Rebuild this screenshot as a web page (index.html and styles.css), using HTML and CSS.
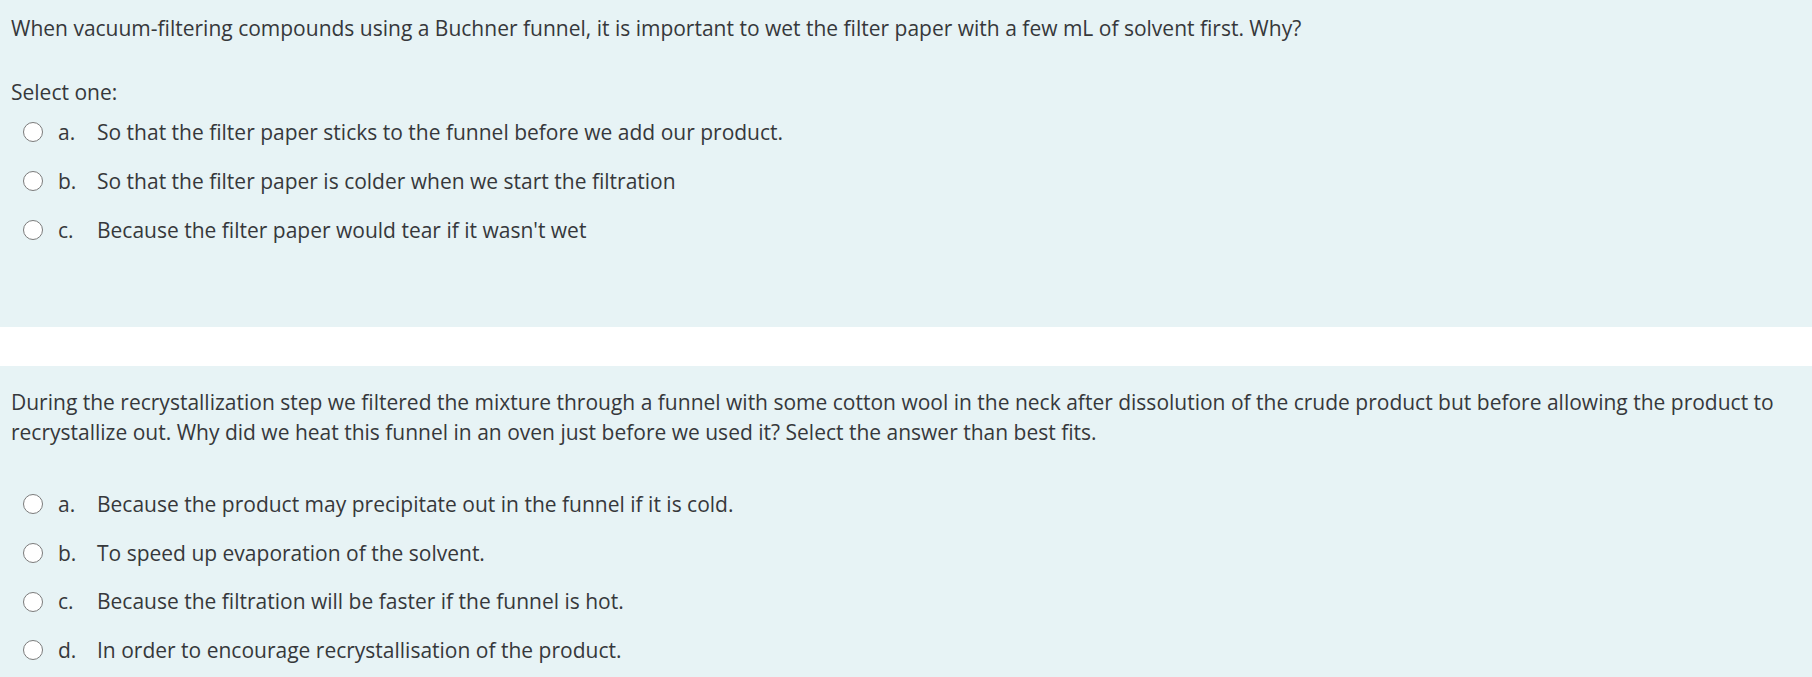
FILE: index.html
```html
<!DOCTYPE html>
<html lang="en">
<head>
<meta charset="utf-8">
<title>Quiz</title>
<link rel="stylesheet" href="styles.css">
</head>
<body>
<div class="que que-first">
  <div class="qtext">When vacuum-filtering compounds using a Buchner funnel, it is important to wet the filter paper with a few mL of solvent first. Why?</div>
  <div class="prompt">Select one:</div>
  <div class="answer">
    <div class="opt"><span class="radio"></span><span class="num">a.</span><span class="text">So that the filter paper sticks to the funnel before we add our product.</span></div>
    <div class="opt"><span class="radio"></span><span class="num">b.</span><span class="text">So that the filter paper is colder when we start the filtration</span></div>
    <div class="opt"><span class="radio"></span><span class="num">c.</span><span class="text">Because the filter paper would tear if it wasn't wet</span></div>
  </div>
</div>
<div class="que que-second">
  <div class="qtext qtext-long">During the recrystallization step we filtered the mixture through a funnel with some cotton wool in the neck after dissolution of the crude product but before allowing the product to recrystallize out. Why did we heat this funnel in an oven just before we used it? Select the answer than best fits.</div>
  <div class="answer">
    <div class="opt"><span class="radio"></span><span class="num">a.</span><span class="text">Because the product may precipitate out in the funnel if it is cold.</span></div>
    <div class="opt"><span class="radio"></span><span class="num">b.</span><span class="text">To speed up evaporation of the solvent.</span></div>
    <div class="opt"><span class="radio"></span><span class="num">c.</span><span class="text">Because the filtration will be faster if the funnel is hot.</span></div>
    <div class="opt"><span class="radio"></span><span class="num">d.</span><span class="text">In order to encourage recrystallisation of the product.</span></div>
  </div>
</div>
</body>
</html>
```

FILE: styles.css
```css
html, body {
  margin: 0;
  padding: 0;
  background: #ffffff;
}

body {
  font-family: "Open Sans", "Noto Sans", sans-serif;
  font-size: 21px;
  line-height: 30.4px;
  color: #36383b;
}

.que {
  background: #e7f3f5;
  padding-left: 11px;
  padding-right: 11px;
}

.que-first {
  padding-top: 13px;
  padding-bottom: 73.4px;
  margin-bottom: 39px;
}

.que-second {
  padding-top: 21px;
  padding-bottom: 30px;
}

.qtext {
  margin-bottom: 33.4px;
}

.qtext-long {
  margin-bottom: 31px;
}

.answer {
  display: flex;
  flex-direction: column;
}

.opt {
  display: flex;
  align-items: center;
  padding: 10px 0 8.4px;
}

.radio {
  box-sizing: border-box;
  width: 20px;
  height: 20px;
  margin-left: 12px;
  border: 1.5px solid #7b7b7b;
  border-radius: 50%;
  background: #ffffff;
  flex: none;
}

.num {
  width: 39px;
  margin-left: 15px;
  flex: none;
}
```
